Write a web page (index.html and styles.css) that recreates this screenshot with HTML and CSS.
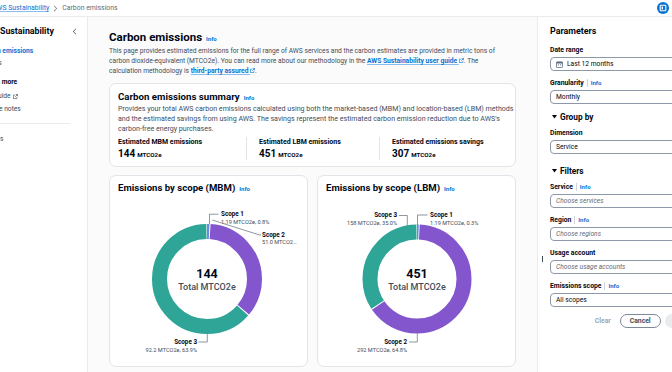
FILE: index.html
```html
<!DOCTYPE html>
<html lang="en">
<head>
<meta charset="utf-8">
<title>Carbon emissions</title>
<link rel="stylesheet" href="styles.css">
</head>
<body>
<header class="topbar">
  <nav class="crumbs">
    <a class="crumb-link">AWS Sustainability</a>
    <svg class="crumb-sep" width="5" height="7" viewBox="0 0 5 7"><path d="M1 0.8 L3.8 3.5 L1 6.2" fill="none" stroke="#5f6b7a" stroke-width="0.9"/></svg>
    <span class="crumb-current">Carbon emissions</span>
  </nav>
  <span class="top-icon">
    <svg width="12" height="12" viewBox="0 0 12 12"><circle cx="6" cy="6" r="6" fill="#0972d3"/><rect x="3.2" y="3.2" width="5.6" height="5.6" rx="0.8" fill="none" stroke="#fff" stroke-width="1.1"/><rect x="4.6" y="4.6" width="1.4" height="2.8" fill="#fff"/></svg>
  </span>
</header>
<div class="layout">
  <aside class="sidebar">
    <div class="nav">
      <div class="nav-head">
        <span>AWS Sustainability</span>
        <svg width="5" height="7" viewBox="0 0 5 7"><path d="M4 0.8 L1.2 3.5 L4 6.2" fill="none" stroke="#414d5c" stroke-width="0.9"/></svg>
      </div>
      <a class="nav-item active">Carbon emissions</a>
      <a class="nav-item">Exports</a>
      <div class="nav-section">Learn more</div>
      <a class="nav-item">User guide <svg class="ext" width="5" height="5" viewBox="0 0 6 6"><path d="M3.2 0.5H5.5V2.8M5.5 0.5L2.6 3.4M4.6 3.8V5.5H0.5V1.4H2.2" fill="none" stroke="currentColor" stroke-width="0.8"/></svg></a>
      <a class="nav-item">Release notes</a>
      <hr class="nav-divider">
      <a class="nav-item">Settings</a>
    </div>
  </aside>

  <main class="main">
    <h1 class="page-title">Carbon emissions <span class="info">Info</span></h1>
    <p class="desc">This page provides estimated emissions for the full range of AWS services and the carbon estimates are provided in metric tons of carbon dioxide-equivalent (MTCO2e). You can read more about our methodology in the <a class="link">AWS Sustainability user guide <svg class="ext" width="5" height="5" viewBox="0 0 6 6"><path d="M3.2 0.5H5.5V2.8M5.5 0.5L2.6 3.4M4.6 3.8V5.5H0.5V1.4H2.2" fill="none" stroke="currentColor" stroke-width="0.8"/></svg></a>. The<br>calculation methodology is <a class="link">third-party assured <svg class="ext" width="5" height="5" viewBox="0 0 6 6"><path d="M3.2 0.5H5.5V2.8M5.5 0.5L2.6 3.4M4.6 3.8V5.5H0.5V1.4H2.2" fill="none" stroke="currentColor" stroke-width="0.8"/></svg></a>.</p>

    <section class="card summary">
      <h2 class="card-title">Carbon emissions summary <span class="info">Info</span></h2>
      <p class="card-desc">Provides your total AWS carbon emissions calculated using both the market-based (MBM) and location-based (LBM) methods<br>and the estimated savings from using AWS. The savings represent the estimated carbon emission reduction due to AWS's<br>carbon-free energy purchases.</p>
      <div class="stats">
        <div class="stat">
          <div class="stat-label">Estimated MBM emissions</div>
          <div class="stat-value">144<span class="unit">MTCO2e</span></div>
        </div>
        <div class="stat">
          <div class="stat-label">Estimated LBM emissions</div>
          <div class="stat-value">451<span class="unit">MTCO2e</span></div>
        </div>
        <div class="stat">
          <div class="stat-label">Estimated emissions savings</div>
          <div class="stat-value">307<span class="unit">MTCO2e</span></div>
        </div>
      </div>
    </section>

    <div class="charts">
      <section class="card chart-card">
        <h2 class="card-title chart-title">Emissions by scope (MBM) <span class="info">Info</span></h2>
        <svg class="donut" width="196" height="164" viewBox="0 0 196 164">
          <g transform="rotate(-90 97 84)" fill="none" stroke-width="15">
            <circle cx="97" cy="84" r="47.5" stroke="#688ae8" stroke-dasharray="2.2 400" stroke-dashoffset="0"/>
            <circle cx="97" cy="84" r="47.5" stroke="#8456ce" stroke-dasharray="104.6 400" stroke-dashoffset="-3.2"/>
            <circle cx="97" cy="84" r="47.5" stroke="#2ea597" stroke-dasharray="188.6 400" stroke-dashoffset="-108.8"/>
          </g>
          <g class="leader" fill="none">
            <polyline points="99.5,29 99.5,19.2 108.5,19.2"/>
            <polyline points="102.3,25 149.5,40 151,40"/>
            <polyline points="88.5,147 97.3,147 97.3,139"/>
          </g>
          <text class="lbl" x="111" y="21.3">Scope 1</text>
          <text class="sub" x="111" y="29.2">1.19 MTCO2e, 0.8%</text>
          <text class="lbl" x="152" y="42.3">Scope 2</text>
          <text class="sub" x="152" y="49.2">51.0 MTCO2…</text>
          <text class="lbl" x="87" y="149.3" text-anchor="end">Scope 3</text>
          <text class="sub" x="87" y="157.2" text-anchor="end">92.2 MTCO2e, 63.9%</text>
          <text class="big" x="97" y="83.3" text-anchor="middle">144</text>
          <text class="total" x="97" y="95.3" text-anchor="middle">Total MTCO2e</text>
        </svg>
      </section>
      <section class="card chart-card">
        <h2 class="card-title chart-title">Emissions by scope (LBM) <span class="info">Info</span></h2>
        <svg class="donut" width="196" height="164" viewBox="0 0 196 164">
          <g transform="rotate(-90 99 84)" fill="none" stroke-width="15">
            <circle cx="99" cy="84" r="47" stroke="#688ae8" stroke-dasharray="1.6 400" stroke-dashoffset="0"/>
            <circle cx="99" cy="84" r="47" stroke="#8456ce" stroke-dasharray="190.6 400" stroke-dashoffset="-2.4"/>
            <circle cx="99" cy="84" r="47" stroke="#2ea597" stroke-dasharray="100.3 400" stroke-dashoffset="-194"/>
          </g>
          <g class="leader" fill="none">
            <polyline points="99.5,30 99.5,20 109.5,20"/>
            <polyline points="81,20.5 89.3,20.5 89.3,30.5"/>
            <polyline points="91,147 99.3,147 99.3,138.5"/>
          </g>
          <text class="lbl" x="112" y="22.2">Scope 1</text>
          <text class="sub" x="112" y="30">1.19 MTCO2e, 0.3%</text>
          <text class="lbl" x="79" y="22.2" text-anchor="end">Scope 3</text>
          <text class="sub" x="79" y="30" text-anchor="end">158 MTCO2e, 35.0%</text>
          <text class="lbl" x="89" y="149.3" text-anchor="end">Scope 2</text>
          <text class="sub" x="89" y="157.2" text-anchor="end">292 MTCO2e, 64.8%</text>
          <text class="big" x="99" y="83.3" text-anchor="middle">451</text>
          <text class="total" x="99" y="95.3" text-anchor="middle">Total MTCO2e</text>
        </svg>
      </section>
    </div>
  </main>

  <aside class="panel">
    <span class="handle"></span>
    <div class="panel-inner">
      <h2 class="panel-title">Parameters</h2>
      <div class="field">
        <div class="field-label">Date range</div>
        <div class="control">
          <svg class="cal" width="7" height="7" viewBox="0 0 7 7"><rect x="0.5" y="0.9" width="6" height="5.6" rx="0.6" fill="none" stroke="#5f6b7a" stroke-width="0.8"/><rect x="0.5" y="0.9" width="6" height="1.6" fill="#5f6b7a"/><rect x="1.8" y="3.4" width="1.1" height="1" fill="#5f6b7a"/><rect x="4" y="3.4" width="1.1" height="1" fill="#5f6b7a"/></svg>
          <span>Last 12 months</span>
        </div>
      </div>
      <div class="field">
        <div class="field-label">Granularity <span class="sep"></span><span class="info">Info</span></div>
        <div class="control">Monthly</div>
      </div>
      <div class="section-head group"><svg width="5" height="4" viewBox="0 0 5 4"><path d="M0 0H5L2.5 3.6Z" fill="#000716"/></svg>Group by</div>
      <div class="field tight">
        <div class="field-label">Dimension</div>
        <div class="control">Service</div>
      </div>
      <div class="section-head filters"><svg width="5" height="4" viewBox="0 0 5 4"><path d="M0 0H5L2.5 3.6Z" fill="#000716"/></svg>Filters</div>
      <div class="field tight">
        <div class="field-label">Service <span class="sep"></span><span class="info">Info</span></div>
        <div class="control placeholder">Choose services</div>
      </div>
      <div class="field">
        <div class="field-label">Region <span class="sep"></span><span class="info">Info</span></div>
        <div class="control placeholder">Choose regions</div>
      </div>
      <div class="field">
        <div class="field-label">Usage account</div>
        <div class="control placeholder">Choose usage accounts</div>
      </div>
      <div class="field">
        <div class="field-label">Emissions scope <span class="sep"></span><span class="info">Info</span></div>
        <div class="control">All scopes</div>
      </div>
      <div class="btn-row">
        <span class="btn btn-link">Clear</span>
        <span class="btn btn-cancel">Cancel</span>
        <span class="btn btn-primary">Apply</span>
      </div>
    </div>
  </aside>
</div>
</body>
</html>
```
FILE: styles.css
```css
* { box-sizing: border-box; }

body {
  margin: 0;
  width: 672px;
  height: 372px;
  overflow: hidden;
  background: #ffffff;
  color: #000716;
  font-family: Roboto, "Open Sans", Arial, sans-serif;
  font-size: 6.7px;
  line-height: 10px;
}

a { color: inherit; text-decoration: none; }
h1, h2, p { margin: 0; }

/* top bar */
.topbar {
  height: 17px;
  border-bottom: 1px solid #e9ebed;
  display: flex;
  align-items: center;
  justify-content: space-between;
  padding-right: 3px;
}
.crumbs {
  display: flex;
  align-items: center;
  gap: 4px;
  margin-left: -8px;
  font-size: 6.9px;
}
.crumb-link {
  color: #0972d3;
  text-decoration: underline;
  text-decoration-color: #89bdee;
}
.crumb-current { color: #5f6b7a; }
.top-icon { display: flex; }

/* layout */
.layout {
  display: grid;
  grid-template-columns: 88px 1fr 135px;
  height: 355px;
}

/* sidebar */
.sidebar {
  border-right: 1px solid #e9ebed;
  overflow: hidden;
  background: #fff;
}
.nav {
  margin-left: -21px;
  padding: 7px 10px 0 0;
  display: flex;
  flex-direction: column;
}
.nav-head {
  display: flex;
  align-items: center;
  justify-content: space-between;
  font-size: 8.8px;
  font-weight: 700;
  line-height: 14px;
}
.nav-item {
  color: #414d5c;
  white-space: nowrap;
  line-height: 10px;
  margin-top: 2px;
  display: flex;
  align-items: center;
  gap: 2px;
}
.nav-item.active {
  color: #0972d3;
  font-weight: 700;
  margin-top: 8px;
}
.nav-section {
  font-weight: 700;
  margin-top: 9px;
  margin-left: 4px;
  line-height: 10px;
}
.nav-section + .nav-item { margin-top: 4px; }
.nav-section + .nav-item + .nav-item { margin-top: 3px; }
.nav-divider {
  border: 0;
  border-top: 1px solid #e9ebed;
  margin: 9px 7px 0 0;
}
.nav-divider + .nav-item { margin-top: 10px; }
.ext { flex: none; }

/* main */
.main {
  background: #fbfbfb;
  padding: 12px 21px 0 21px;
  overflow: hidden;
}
.page-title {
  display: flex;
  align-items: baseline;
  gap: 4px;
  font-size: 11.5px;
  line-height: 16px;
  font-weight: 700;
}
.info {
  color: #0972d3;
  font-size: 6px;
  font-weight: 700;
  line-height: 8px;
}
.desc {
  margin-top: 1px;
  color: #414d5c;
}
.link {
  color: #0972d3;
  font-weight: 700;
  text-decoration: underline;
  text-decoration-color: #89bdee;
}

.card {
  background: #fff;
  border: 1px solid #e1e4e8;
  border-radius: 7px;
}
.summary {
  margin-top: 7px;
  padding: 6px 2px 6px 8px;
}
.card-title {
  display: flex;
  align-items: baseline;
  gap: 4px;
  font-size: 9.7px;
  line-height: 14px;
  font-weight: 700;
}
.card-desc {
  color: #414d5c;
  font-size: 7.1px;
  white-space: nowrap;
}
.stats {
  display: grid;
  grid-template-columns: 128px 133px 1fr;
  margin-top: 3px;
}
.stat + .stat {
  border-left: 1px solid #e1e4e8;
  padding-left: 12px;
}
.stat-label {
  font-size: 7px;
  font-weight: 700;
  line-height: 10px;
}
.stat-value {
  font-size: 10px;
  font-weight: 700;
  line-height: 13px;
}
.unit {
  font-size: 6.2px;
  line-height: 8px;
  margin-left: 2px;
}

.charts {
  margin-top: 8px;
  display: grid;
  grid-template-columns: 1fr 1fr;
  gap: 9px;
}
.chart-card {
  height: 192px;
  padding-top: 5px;
}
.chart-title {
  font-size: 9.6px;
  padding-left: 8px;
}
.donut { display: block; }
.leader polyline {
  stroke: #5f6b7a;
  stroke-width: 0.7;
}
.lbl { font-size: 6.3px; font-weight: 700; fill: #000716; }
.sub { font-size: 5.6px; fill: #414d5c; }
.big { font-size: 12.5px; font-weight: 700; fill: #000716; }
.total { font-size: 9px; font-weight: 500; fill: #414d5c; }

/* right panel */
.panel {
  position: relative;
  border-left: 1px solid #e9ebed;
  background: #fff;
  overflow: hidden;
  padding: 7px 0 0 12px;
}
.handle {
  position: absolute;
  left: 4px;
  top: 239px;
  width: 1px;
  height: 6px;
  background: #414d5c;
}
.panel-inner { width: 150px; }
.panel-title {
  font-size: 8.9px;
  line-height: 14px;
  font-weight: 700;
}
.field { margin-top: 7px; }
.field.tight { margin-top: 5px; }
.field-label {
  display: flex;
  align-items: center;
  gap: 3px;
  font-size: 6.8px;
  font-weight: 700;
  line-height: 10px;
}
.sep {
  width: 1px;
  height: 8px;
  background: #d1d5db;
}
.control {
  margin-top: 2px;
  height: 14px;
  border: 1px solid #8d99a8;
  border-radius: 4px;
  display: flex;
  align-items: center;
  gap: 4px;
  padding: 0 5px;
  background: #fff;
  white-space: nowrap;
}
.control.placeholder {
  font-style: italic;
  color: #5f6b7a;
}
.section-head {
  display: flex;
  align-items: center;
  gap: 3px;
  font-size: 8.3px;
  font-weight: 700;
  line-height: 12px;
  padding-left: 2px;
}
.section-head.group { margin-top: 7px; }
.section-head.filters { margin-top: 11px; }
.btn-row {
  margin-top: 7px;
  display: flex;
  justify-content: flex-end;
  align-items: center;
  gap: 4px;
}
.btn {
  height: 14px;
  display: flex;
  align-items: center;
  font-weight: 700;
  font-size: 6.8px;
  border-radius: 7px;
  white-space: nowrap;
}
.btn-link {
  color: #9ba7b6;
  padding: 0 5px;
}
.btn-cancel {
  border: 1px solid #7d8998;
  color: #414d5c;
  padding: 0 9px;
}
.btn-primary {
  background: #e9ebed;
  color: #9ba7b6;
  padding: 0 9px;
}
```
